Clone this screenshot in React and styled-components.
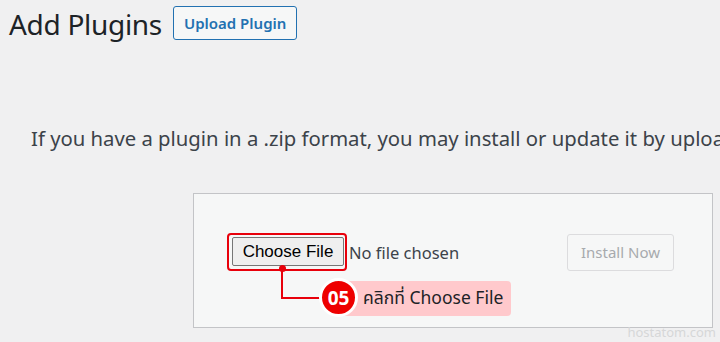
import React from "react";
import styled, { createGlobalStyle } from "styled-components";

const GlobalStyle = createGlobalStyle`
  html, body {
    margin: 0;
    padding: 0;
    background: #f0f0f1;
    overflow: hidden;
  }
  body {
    width: 720px;
    height: 342px;
    font-family: "Noto Sans", "Noto Sans Thai", "Open Sans", sans-serif;
    color: #3c434a;
  }
`;

const Page = styled.div`
  position: relative;
  width: 720px;
  height: 342px;
  padding-left: 9px;
  box-sizing: border-box;
  overflow: hidden;
`;

const HeaderRow = styled.div`
  display: flex;
  align-items: center;
  gap: 11px;
  height: 47px;
`;

const Title = styled.h1`
  margin: 0;
  font-size: 28px;
  font-weight: 400;
  color: #1d2327;
  letter-spacing: -0.3px;
`;

const UploadButton = styled.button`
  height: 34px;
  padding: 0 10px;
  margin-top: -1px;
  border: 1px solid #2271b1;
  border-radius: 3px;
  background: #f6f7f7;
  color: #2271b1;
  font-family: inherit;
  font-size: 15px;
  font-weight: 600;
`;

const Description = styled.p`
  margin: 77px 0 0 22px;
  font-size: 20.3px;
  line-height: 28px;
  white-space: nowrap;
  color: #3c434a;
`;

const UploadBox = styled.div`
  display: flex;
  align-items: center;
  justify-content: space-between;
  box-sizing: border-box;
  width: 520px;
  height: 135px;
  margin: 41px 0 0 184px;
  padding: 0 38px 17px 33px;
  border: 1px solid #c3c4c7;
  background: #f6f7f7;
`;

const FileField = styled.div`
  display: flex;
  align-items: center;
  gap: 2px;
`;

const Highlight = styled.div`
  position: relative;
  padding: 2px 1px 3px 3px;
  border: 2px solid #e8000b;
  border-radius: 4px;
`;

const ChooseButton = styled.button`
  display: block;
  width: 112px;
  height: 29px;
  padding: 0;
  border: 1px solid #767676;
  border-radius: 2px;
  background: #efefef;
  color: #000;
  font-family: "Liberation Sans", Arial, sans-serif;
  font-size: 17px;
`;

const FileStatus = styled.span`
  font-size: 16.5px;
  color: #3c434a;
`;

const InstallButton = styled.button`
  width: 107px;
  height: 37px;
  padding: 0;
  border: 1px solid #dcdcde;
  border-radius: 3px;
  background: #f6f7f7;
  color: #a7aaad;
  font-family: inherit;
  font-size: 15px;
`;

const Dot = styled.span`
  position: absolute;
  left: 50px;
  top: 30px;
  width: 7px;
  height: 7px;
  border-radius: 50%;
  background: #e8000b;
`;

const LeaderLine = styled.span`
  position: absolute;
  left: 52px;
  top: 33px;
  width: 44px;
  height: 29px;
  border-left: 2px solid #e8000b;
  border-bottom: 2px solid #e8000b;
`;

const Label = styled.div`
  position: absolute;
  left: 110px;
  top: 46px;
  display: flex;
  align-items: center;
  height: 35px;
  padding: 0 8px 0 24px;
  border-radius: 4px;
  background: #ffc9cc;
  color: #1d2327;
  font-size: 17.5px;
  white-space: nowrap;
`;

const Badge = styled.span`
  position: absolute;
  left: 90px;
  top: 43px;
  display: flex;
  align-items: center;
  justify-content: center;
  box-sizing: border-box;
  width: 39px;
  height: 39px;
  border: 3px solid #fff;
  border-radius: 50%;
  background: #ee0000;
  color: #fff;
  font-size: 19px;
  font-weight: 700;
`;

const Watermark = styled.span`
  position: absolute;
  right: 4px;
  bottom: 1px;
  font-size: 13px;
  color: #d6d7d8;
`;

export default function App() {
  return (
    <>
      <GlobalStyle />
      <Page>
        <HeaderRow>
          <Title>Add Plugins</Title>
          <UploadButton>Upload Plugin</UploadButton>
        </HeaderRow>
        <Description>
          If you have a plugin in a .zip format, you may install or update it by uploading it here.
        </Description>
        <UploadBox>
          <FileField>
            <Highlight>
              <ChooseButton>Choose File</ChooseButton>
              <Dot />
              <LeaderLine />
              <Label>คลิกที่ Choose File</Label>
              <Badge>05</Badge>
            </Highlight>
            <FileStatus>No file chosen</FileStatus>
          </FileField>
          <InstallButton>Install Now</InstallButton>
        </UploadBox>
        <Watermark>hostatom.com</Watermark>
      </Page>
    </>
  );
}
